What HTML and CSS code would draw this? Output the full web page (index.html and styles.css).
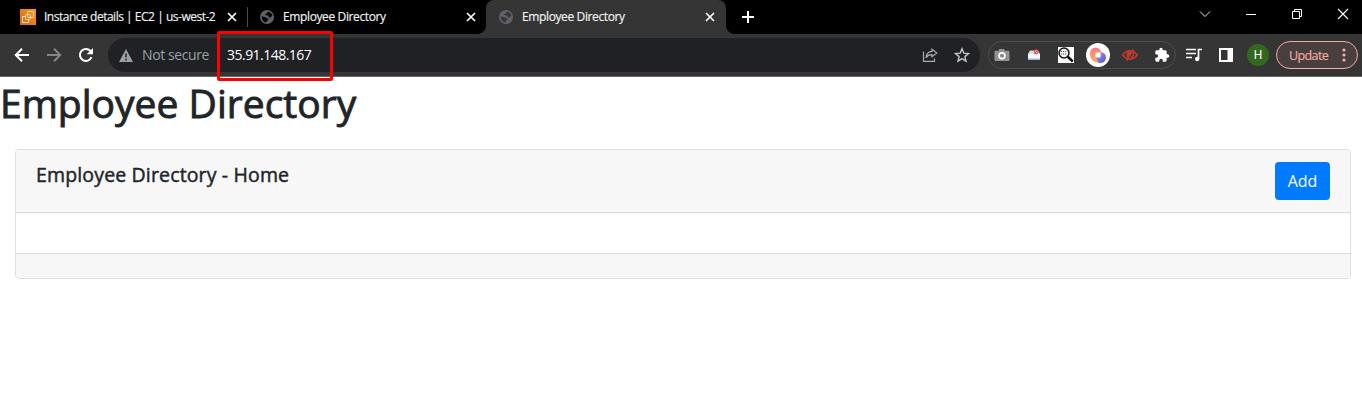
FILE: index.html
```html
<!DOCTYPE html>
<html lang="en">
<head>
<meta charset="utf-8">
<title>Employee Directory</title>
<link rel="stylesheet" href="styles.css">
</head>
<body>
<svg width="0" height="0" class="defs">
  <symbol id="x" viewBox="0 0 10 10"><path d="M1 1l8 8M9 1l-8 8" fill="none" stroke="currentColor" stroke-width="1.7"/></symbol>
  <symbol id="globe" viewBox="0 0 14 14"><circle cx="7" cy="7" r="7" fill="#5f6368"/><path d="M7.6 1.6C9.8 1.8 11.9 3.3 12.4 5.6L10.5 7.4H8.7V5.9L7.2 5.2H5.3L5.2 4.1L7.2 3.2zM1.7 6.2L5.2 7.3L7.5 8.2L8.5 9.5L7 10.8L6.5 12.3C3.6 12 1.4 9.5 1.7 6.2z" fill="var(--hole)"/></symbol>
</svg>
<div class="tabs">
  <div class="tab first">
    <svg class="fav16" viewBox="0 0 16 16"><defs><linearGradient id="g" x1="0" y1="1" x2="1" y2="0"><stop stop-color="#d86613"/><stop offset="1" stop-color="#f7981f"/></linearGradient></defs><rect width="16" height="16" fill="url(#g)"/><g fill="none" stroke="#ffe0b8"><rect x="7.500" y="2.500" width="6" height="6" rx="1"/><rect x="5.500" y="5.500" width="5" height="5" rx="1"/><path d="M5 7.500H2.500V13.500H8.500V11"/></g></svg>
    <span class="tab-title t1">Instance details | EC2 | us-west-2</span>
    <svg class="close"><use href="#x"/></svg>
  </div>
  <div class="tab second">
    <svg class="fav14"><use href="#globe"/></svg>
    <span class="tab-title">Employee Directory</span>
    <svg class="close"><use href="#x"/></svg>
  </div>
  <div class="tab active">
    <svg class="fav14"><use href="#globe"/></svg>
    <span class="tab-title">Employee Directory</span>
    <svg class="close"><use href="#x"/></svg>
  </div>
  <svg class="plus" viewBox="0 0 12 12"><path d="M6 0v12M0 6h12" stroke="#fff" stroke-width="2"/></svg>
  <div class="controls">
    <svg viewBox="0 0 12 12"><path d="M1 3.500l5 5 5-5" fill="none" stroke="#e4e4e4"/></svg>
    <svg viewBox="0 0 12 12"><path d="M1 6.500h10" stroke="#fff"/></svg>
    <svg viewBox="0 0 12 12"><path d="M1.500 3.500h7v7h-7zM3.500 3V1.500h7v7H9" fill="none" stroke="#fff"/></svg>
    <svg viewBox="0 0 12 12"><path d="M1 1l10 10M11 1L1 11" stroke="#fff" stroke-width="1.100"/></svg>
  </div>
</div>
<div class="toolbar">
  <svg class="nav" viewBox="0 0 16 16"><path d="M15 8H2M8 1.800L1.800 8L8 14.200" fill="none" stroke="#fff" stroke-width="2"/></svg>
  <svg class="nav" viewBox="0 0 16 16"><path d="M1 8h13M8 1.800L14.200 8L8 14.200" fill="none" stroke="#858585" stroke-width="2"/></svg>
  <svg class="nav" viewBox="0 0 16 16"><path d="M13.500 10.200A6 6 0 1 1 12.300 3.800L13.600 5" fill="none" stroke="#fff" stroke-width="2"/><path d="M15 1v6.300H8.700z" fill="#fff"/></svg>
  <div class="omnibox">
    <svg class="warn" viewBox="0 0 14 13"><path d="M7 0l7 13H0z" fill="#9aa0a6"/><path d="M7 4.500v4M7 9.700v1.700" stroke="#202124" stroke-width="1.500"/></svg>
    <span class="secure">Not secure</span>
    <span class="url">35.91.148.167</span>
    <svg class="share" viewBox="0 0 16 14"><path d="M1.500 3.500V13.300H12.500V10.500M10 1.200L14.800 5L10 8.800V6.700C7.200 6.500 5.500 7.500 4 9.800C4.300 6.100 6.500 3.600 10 3.400z" fill="none" stroke="#a9abad" stroke-width="1.200"/></svg>
    <svg class="star" viewBox="0 0 16 16"><path d="M8 1.800l1.800 4.300 4.700.4-3.600 3.100 1.100 4.600-4-2.500-4 2.500 1.100-4.600L1.500 6.500l4.700-.4z" fill="none" stroke="#c3c5c8" stroke-width="1.400"/></svg>
  </div>
  <div class="extensions">
    <svg class="ic" viewBox="0 0 16 16"><path d="M5 3V2h5l1 1.800h3.500q1 0 1 1V13q0 1-1 1h-13q-1 0-1-1V4.800q0-1 1-1h3z" fill="#929292"/><circle cx="8" cy="8.800" r="2.900" fill="#858585" stroke="#fff" stroke-width="1.700"/></svg>
    <svg class="ic" viewBox="0 0 16 16"><path d="M4 3.500h8L14 7v5.500H2V7z" fill="#dedede"/><path d="M2 7h12v4H2z" fill="#f7f9ff"/><path d="M2 12h12" stroke="#b9d5ef" stroke-width="1.200"/><circle cx="10.200" cy="4.800" r="2" fill="#f4b0b0" stroke="#d84545"/><path d="M8.800 6.200l2.800-2.800" stroke="#d84545"/></svg>
    <svg class="ic" viewBox="0 0 16 16"><path d="M0 0h16v16H0z" fill="#fff"/><circle cx="6" cy="6" r="5" fill="#eee" stroke="#111" stroke-width="1.500"/><path d="M9.500 9.500l5.300 5" stroke="#111" stroke-width="2.500"/><path d="M3 4.500h6M3 7h6" stroke="#555" stroke-dasharray="1 1"/></svg>
    <svg class="ic big" viewBox="0 0 24 24"><defs><linearGradient id="r" x1="0" y1="0" x2="0" y2="1"><stop stop-color="#fb7979"/><stop offset="1" stop-color="#fcae68"/></linearGradient><linearGradient id="p" x1="0" y1="0" x2="1" y2="1"><stop stop-color="#b8a0ee"/><stop offset="1" stop-color="#4e51c9"/></linearGradient></defs><circle cx="12" cy="12" r="12" fill="#fff"/><circle cx="14.500" cy="14.500" r="5.500" fill="url(#p)"/><path d="M9.500 4.500A5.500 5.500 0 0 1 15 10H10v5l2.500 4.300C7 20 4 16 4 10a5.500 5.500 0 0 1 5.500-5.500z" fill="url(#r)"/><rect x="9.500" y="9.500" width="5" height="5" rx=".5" fill="#fff"/></svg>
    <svg class="ic" viewBox="0 0 16 16"><path d="M.7 8Q4 3.800 8 3.800T15.300 8Q12 12.200 8 12.200T.7 8z" fill="none" stroke="#c63a2b" stroke-width="1.500"/><path d="M8.500 4a4 4 0 0 0-4 4q0 1.500 1 2.700L9.500 5z" fill="#c63a2b"/><path d="M4.500 13.500L11.500 2.500M11.300 5.500q1.200 3.200-2.300 5.500" fill="none" stroke="#c63a2b" stroke-width="1.500"/></svg>
    <svg class="ic" viewBox="0 0 24 24"><path d="M20.500 11H19V7a2 2 0 0 0-2-2h-4V3.500a2.500 2.500 0 0 0-5 0V5H4a2 2 0 0 0-2 2v3.800h1.500a2.700 2.700 0 0 1 0 5.400H2V20a2 2 0 0 0 2 2h3.800v-1.500a2.700 2.700 0 0 1 5.400 0V22H17a2 2 0 0 0 2-2v-4h1.500a2.500 2.500 0 0 0 0-5z" fill="#fff"/></svg>
  </div>
  <div class="right">
    <svg class="ic" viewBox="0 0 16 16"><path d="M0 2.500h10M0 6.500h10M0 10.500h6M12.500 12V2.500H16" fill="none" stroke="#fff" stroke-width="1.700"/><circle cx="11.200" cy="12" r="2.200" fill="#fff"/></svg>
    <svg class="ic" viewBox="0 0 16 16"><path d="M1 1h14v14H1zM3 3v10h6.500V3z" fill="#fff" fill-rule="evenodd"/></svg>
    <div class="avatar">H</div>
  </div>
  <div class="update"><span>Update</span><svg viewBox="0 0 4 14"><g fill="#f2b3ab"><circle cx="2" cy="2" r="1.600"/><circle cx="2" cy="7" r="1.600"/><circle cx="2" cy="12" r="1.600"/></g></svg></div>
</div>
<div class="highlight"></div>
<main>
  <h1>Employee Directory</h1>
  <section class="card">
    <div class="card-header"><h2>Employee Directory - Home</h2><button>Add</button></div>
    <div class="card-body"></div>
    <div class="card-footer"></div>
  </section>
</main>
</body>
</html>
```
FILE: styles.css
```css
* { box-sizing: border-box; }
body { margin: 0; background: #fff; color: #212529; font-family: "Open Sans", "Noto Sans", sans-serif; height: 406px; overflow: hidden; }
svg { display: block; flex: none; }
.defs { position: absolute; }
.tabs { height: 34px; background: #000; display: flex; --hole: #000; }
.tab { display: flex; align-items: center; color: #f1f3f4; position: relative; }
.tab-title { font-size: 12px; line-height: 18px; margin-left: 9px; flex: 1; white-space: nowrap; letter-spacing: -.38px; -webkit-text-stroke: .15px; }
.t1 { margin-left: 8px; letter-spacing: -.48px; }
.close { width: 10px; height: 10px; color: #fff; }
.fav16 { width: 16px; height: 16px; }
.fav14 { width: 14px; height: 14px; }
.first { width: 247px; padding: 0 10px 0 20px; }
.second { width: 239px; padding: 0 10px 0 12px; border-left: 1px solid transparent; }
.second::before { content: ""; position: absolute; left: -1px; top: 7px; width: 1px; height: 20px; background: #4a4a4a; }
.active { width: 240px; padding: 0 11px 0 13px; background: #353535; border-radius: 8px 8px 0 0; --hole: #353535; }
.active::before, .active::after { content: ""; position: absolute; bottom: 0; width: 8px; height: 8px; }
.active::before { left: -8px; background: radial-gradient(circle at 0 0, transparent 7.5px, #353535 8px); }
.active::after { right: -8px; background: radial-gradient(circle at 100% 0, transparent 7.5px, #353535 8px); }
.plus { width: 12px; height: 12px; margin: 11px 0 0 16px; }
.controls { display: flex; gap: 34px; margin: 8px 13px 0 auto; }
.controls svg { width: 12px; height: 12px; }
.toolbar { height: 43px; background: #353535; border-bottom: 1px solid #656565; display: flex; align-items: center; padding-left: 14px; }
.nav { width: 16px; height: 16px; margin-right: 16px; }
.nav:nth-child(3) { margin-right: 14px; }
.omnibox { width: 872px; height: 34px; border-radius: 17px; background: #202124; display: flex; align-items: center; padding-left: 11px; font-size: 14px; }
.warn { width: 14px; height: 13px; }
.secure { color: #9aa0a6; margin-left: 9px; width: 85px; white-space: nowrap; letter-spacing: -.4px; padding-bottom: 2px; }
.url { color: #fff; letter-spacing: -.52px; padding-bottom: 2px; }
.share { width: 16px; height: 14px; margin-left: auto; }
.star { width: 16px; height: 16px; margin: 0 10px 0 16px; }
.extensions { width: 188px; height: 28px; border: 1px solid #4c4c4c; border-radius: 14px; margin-left: 8px; padding-left: 5px; display: flex; align-items: center; gap: 16px; }
.ic { width: 16px; height: 16px; }
.big { width: 24px; height: 24px; margin: 0 -4px; }
.right { display: flex; align-items: center; gap: 16px; margin-left: 10px; }
.avatar { width: 22px; height: 22px; border-radius: 50%; background: #33691e; color: #fff; font: 12px/22px Roboto, sans-serif; text-align: center; margin-left: -3px; }
.update { width: 82px; height: 28px; border: 1px solid #f2aaa2; border-radius: 14px; background: #483f3e; color: #f2aaa2; font-size: 12.5px; display: flex; align-items: center; margin-left: 7px; padding-left: 12px; }
.update span { width: 53px; letter-spacing: -.6px; -webkit-text-stroke: .15px; }
.update svg { width: 4px; height: 14px; }
.highlight { position: absolute; left: 217px; top: 31px; width: 116px; height: 50px; border: 3px solid #f00; border-radius: 2px; }
h1 { margin: 0 0 21px; padding-top: 2px; height: 51px; font-size: 39px; line-height: 48px; font-weight: 400; white-space: nowrap; letter-spacing: .02px; -webkit-text-stroke: .9px; }
.card { margin: 0 11px 0 15px; border: 1px solid #dfdfdf; border-radius: 4px; height: 130px; overflow: hidden; }
.card-header { height: 63px; background: #f7f7f7; border-bottom: 1px solid #dadada; display: flex; justify-content: space-between; padding: 12px 20px; }
h2 { margin: 0; font-size: 19.5px; line-height: 26px; font-weight: 400; letter-spacing: .15px; -webkit-text-stroke: .45px; }
button { width: 55px; height: 38px; padding: 0; border: 0; border-radius: 4px; background: #007bff; color: #fff; font: 16px/38px "Open Sans", sans-serif; letter-spacing: -.1px; }
.card-body { height: 40px; }
.card-footer { height: 25px; background: #f7f7f7; border-top: 1px solid #dadada; }
```
